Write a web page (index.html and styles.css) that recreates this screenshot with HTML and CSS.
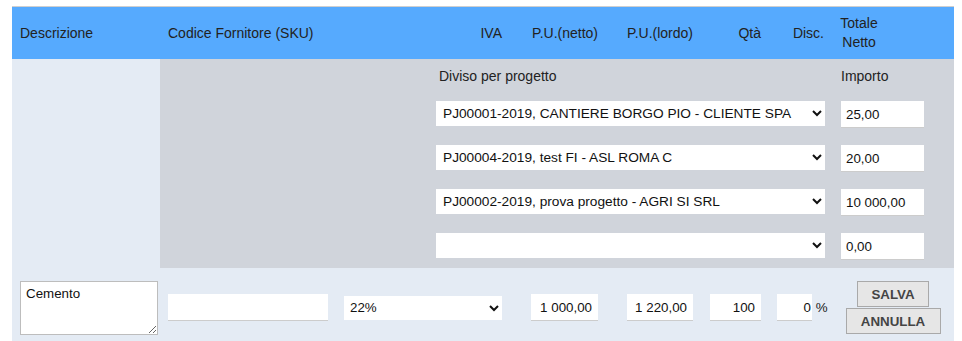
FILE: index.html
```html
<!DOCTYPE html>
<html lang="it">
<head>
    <meta charset="UTF-8" />
    <meta name="viewport" content="width=device-width, initial-scale=1.0" />
    <title>Riga documento</title>
    <link rel="stylesheet" href="styles.css">
</head>
<body>
    <div class="righe">
        <div class="riga-head">
            <div class="cell">Descrizione</div>
            <div class="cell">Codice Fornitore (SKU)</div>
            <div class="cell num">IVA</div>
            <div class="cell num">P.U.(netto)</div>
            <div class="cell num">P.U.(lordo)</div>
            <div class="cell num">Qtà</div>
            <div class="cell num">Disc.</div>
            <div class="cell center">Totale<br>Netto</div>
            <div class="cell"></div>
        </div>

        <div class="riga-split">
            <div class="split-empty"></div>
            <div class="split-panel">
                <div class="split-label">Diviso per progetto</div>
                <div class="split-label importo">Importo</div>

                <select class="progetto">
                    <option>PJ00001-2019, CANTIERE BORGO PIO - CLIENTE SPA</option>
                </select>
                <input type="text" class="importo-input" value="25,00" />

                <select class="progetto">
                    <option>PJ00004-2019, test FI - ASL ROMA C</option>
                </select>
                <input type="text" class="importo-input" value="20,00" />

                <select class="progetto">
                    <option>PJ00002-2019, prova progetto - AGRI SI SRL</option>
                </select>
                <input type="text" class="importo-input" value="10 000,00" />

                <select class="progetto">
                    <option></option>
                </select>
                <input type="text" class="importo-input" value="0,00" />
            </div>
        </div>

        <div class="riga-edit">
            <div class="cell"><textarea class="descr">Cemento</textarea></div>
            <div class="cell"><input type="text" class="sku" /></div>
            <div class="cell">
                <select class="iva">
                    <option>22%</option>
                </select>
            </div>
            <div class="cell num"><input type="text" class="field w67" value="1 000,00" /></div>
            <div class="cell num"><input type="text" class="field w66" value="1 220,00" /></div>
            <div class="cell num"><input type="text" class="field w51" value="100" /></div>
            <div class="cell num disc"><input type="text" class="field w34" value="0" /> %</div>
            <div class="cell actions">
                <button type="button" class="btn salva">SALVA</button>
                <button type="button" class="btn annulla">ANNULLA</button>
            </div>
        </div>
    </div>
</body>
</html>
```

FILE: styles.css
```css
body {
    margin: 0;
    font-family: "Liberation Sans", Arial, sans-serif;
    color: #222;
    background: #fff;
}
.righe {
    margin: 6px 0 0 12px;
    width: 942px;
    border-top: 1px solid #cfcfcf;
}
.riga-head,
.riga-edit {
    display: grid;
    grid-template-columns: 148px 176px 174px 96px 95px 68px 63px 54px 68px;
    align-items: center;
}
.riga-head {
    background: #56aafe;
    height: 52px;
    font-size: 14px;
}
.cell {
    padding: 0 8px;
}
.num {
    text-align: right;
}
.center {
    text-align: center;
    padding: 0;
    line-height: 19px;
}

/* ripartizione per progetto */
.riga-split {
    display: grid;
    grid-template-columns: 148px 794px;
    background: #e4ebf4;
}
.split-panel {
    background: #d0d4db;
    display: grid;
    grid-template-columns: 389px 83px;
    column-gap: 16px;
    row-gap: 17px;
    padding: 8px 30px 8px 276px;
    align-items: start;
}
.split-label {
    font-size: 14px;
    line-height: 18px;
    padding-left: 3px;
    margin-bottom: -1px;
}
.split-label.importo {
    padding-left: 0;
}
select {
    font-family: "Liberation Sans", Arial, sans-serif;
    background: #fff;
    border: none;
    border-radius: 0;
    color: #111;
}
.progetto {
    height: 25px;
    font-size: 13.7px;
    padding: 0 4px 0 3px;
}
input[type="text"] {
    font-family: "Liberation Sans", Arial, sans-serif;
    font-size: 13.33px;
    color: #111;
    background: #fff;
    border: none;
    border-bottom: 1px solid #ccc;
    border-radius: 0;
    box-sizing: border-box;
    height: 27px;
    outline: none;
}
.importo-input {
    width: 83px;
    padding: 0 5px;
}

/* riga in modifica */
.riga-edit {
    background: #e4ebf4;
    padding: 12px 0;
}
.descr {
    display: block;
    width: 138px;
    height: 54px;
    box-sizing: border-box;
    border: 1px solid #bdbdbd;
    padding: 4px 5px;
    margin-top: 1px;
    font-family: "Liberation Sans", Arial, sans-serif;
    font-size: 13.33px;
    color: #111;
    resize: both;
}
.sku {
    display: block;
    width: 160px;
}
.iva {
    display: block;
    width: 158px;
    height: 24px;
    font-size: 13.33px;
    padding: 0 4px 0 2px;
}
.field {
    text-align: right;
    padding: 0 6px;
}
.w67 { width: 67px; }
.w66 { width: 66px; }
.w51 { width: 51px; }
.w34 {
    width: 35px;
    padding: 0 1px;
}
.disc {
    font-size: 13.33px;
    padding-right: 8px;
    white-space: nowrap;
}
.actions {
    grid-column: span 2;
    display: flex;
    flex-direction: column;
    align-items: center;
    gap: 1px;
    padding: 0;
}
.btn {
    font-family: "Liberation Sans", Arial, sans-serif;
    font-size: 13.33px;
    font-weight: bold;
    color: #444;
    background: #e6e6e6;
    border: 1px solid #a9a9a9;
    border-radius: 0;
    height: 26px;
    cursor: pointer;
}
.salva {
    width: 72px;
}
.annulla {
    width: 95px;
}
.btn:hover {
    background: #dadada;
}
```
